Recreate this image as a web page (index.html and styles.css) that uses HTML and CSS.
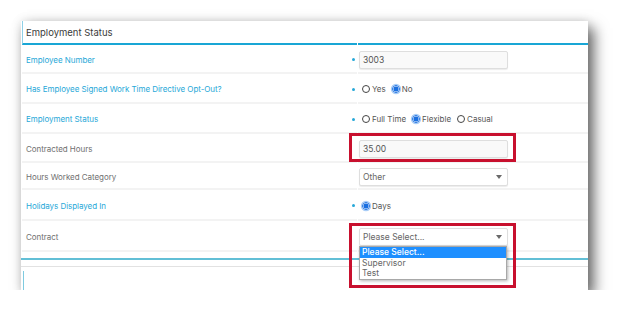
FILE: index.html
```html
<!DOCTYPE html>
<html lang="en">
<head>
    <meta charset="UTF-8">
    <title>Employment Status</title>
    <link rel="stylesheet" href="styles.css">
</head>
<body>

<div class="page">
    <div class="card">
        <div class="grid">
            <div class="head head-title">Employment Status</div>
            <div class="head"></div>

            <div class="cell label req">Employee Number</div>
            <div class="cell field"><div class="input">3003</div></div>

            <div class="cell label req">Has Employee Signed Work Time Directive Opt-Out?</div>
            <div class="cell field">
                <span class="radio"></span><span class="opt">Yes</span>
                <span class="radio checked"></span><span class="opt">No</span>
            </div>

            <div class="cell label req">Employment Status</div>
            <div class="cell field">
                <span class="radio"></span><span class="opt">Full Time</span>
                <span class="radio checked"></span><span class="opt">Flexible</span>
                <span class="radio"></span><span class="opt">Casual</span>
            </div>

            <div class="cell label">Contracted Hours</div>
            <div class="cell field"><div class="input">35.00</div></div>

            <div class="cell label">Hours Worked Category</div>
            <div class="cell field"><div class="select">Other</div></div>

            <div class="cell label req">Holidays Displayed In</div>
            <div class="cell field">
                <span class="radio checked"></span><span class="opt">Days</span>
            </div>

            <div class="cell label">Contract</div>
            <div class="cell field"><div class="select">Please Select...</div></div>
        </div>

        <div class="foot-line"></div>
        <div class="foot-rule"></div>
        <div class="next"></div>

        <!-- lista abierta del select de Contract -->
        <ul class="dropdown">
            <li class="active">Please Select...</li>
            <li>Supervisor</li>
            <li>Test</li>
        </ul>

        <!-- recuadros rojos de la captura -->
        <div class="mark mark-hours"></div>
        <div class="mark mark-contract"></div>
    </div>
</div>

</body>
</html>
```

FILE: styles.css
```css
* {
    margin: 0;
    padding: 0;
    box-sizing: border-box;
}

body {
    background: #fff;
    font-family: Inter, "Noto Sans", sans-serif;
    font-size: 8.5px;
    color: #555;
}

.page {
    padding: 21px 0 0 21px;
}

.card {
    position: relative;
    width: 567px;
    height: 269px;
    background: #fff;
    overflow: hidden;
    box-shadow: 6px 7px 13px rgba(0, 0, 0, 0.58), 0 0 10px rgba(0, 0, 0, 0.12);
}

.grid {
    display: grid;
    grid-template-columns: 335px 230px;
    grid-template-rows: 24px 29px 30px 30px 29px 27px 31px 31px;
    column-gap: 1px;
    margin-left: 1px;
}

.head {
    border-bottom: 2px solid #19a6d5;
}

.head-title {
    display: flex;
    align-items: center;
    border-left: 1px solid #8fd0e6;
    padding-left: 3px;
    font-size: 9.5px;
    color: #3b3b3b;
}

.cell {
    display: flex;
    align-items: center;
    border-bottom: 2px solid #f3f3f3;
    padding-top: 2px;
}

.label {
    justify-content: space-between;
    padding-left: 4px;
    padding-right: 2px;
    font-size: 8px;
    letter-spacing: -0.05px;
    color: #707070;
}

.label.req {
    color: #27a8d8;
}

.label.req::after {
    content: "";
    width: 3px;
    height: 3px;
    border-radius: 50%;
    background: #27a8d8;
}

.field {
    padding-left: 1px;
}

.input,
.select {
    position: relative;
    width: 149px;
    height: 18px;
    line-height: 16px;
    padding-left: 3px;
    border: 1px solid #dedede;
    border-radius: 2px;
    background: #f9f9f9;
    box-shadow: 0 1px 1px rgba(0, 0, 0, 0.08);
    color: #555;
}

.select {
    background: #fff;
    color: #666;
}

.select::after {
    content: "";
    position: absolute;
    right: 5px;
    top: 6px;
    border-left: 3px solid transparent;
    border-right: 3px solid transparent;
    border-top: 4px solid #6a6a6a;
}

.radio {
    display: inline-block;
    width: 8px;
    height: 8px;
    margin-left: 3px;
    margin-right: 2px;
    border: 1px solid #444;
    border-radius: 50%;
    background: #fff;
}

.radio.checked {
    border-color: #1a6fe0;
    background: radial-gradient(circle, #1a6fe0 0 2.2px, #fff 2.8px);
    box-shadow: 0 0 0 1.2px #a9cdf7;
}

.opt {
    margin-right: 3px;
    font-size: 8px;
    color: #555;
}

.foot-line {
    margin-top: 6px;
    height: 2px;
    background: #62bfd6;
}

.foot-rule {
    margin-top: 6px;
    height: 1px;
    background: #e2e2e2;
}

.next {
    margin-top: 4px;
    margin-left: 2px;
    height: 30px;
    border-left: 1px solid #7fcbe0;
}

.dropdown {
    position: absolute;
    left: 338px;
    top: 225px;
    width: 148px;
    height: 34px;
    list-style: none;
    background: #fff;
    border: 1px solid #a8a8a8;
    box-shadow: 1px 1px 3px rgba(0, 0, 0, 0.3);
    font-size: 8.5px;
    color: #666;
}

.dropdown li {
    height: 10.6px;
    line-height: 10.6px;
    padding-left: 2px;
}

.dropdown li.active {
    background: #1e8fff;
    color: #fff;
    font-weight: 500;
}

.mark {
    position: absolute;
    left: 328px;
    width: 167px;
    border: 3px solid #c8102e;
}

.mark-hours {
    top: 112px;
    height: 29px;
}

.mark-contract {
    top: 202px;
    height: 65px;
}
```
